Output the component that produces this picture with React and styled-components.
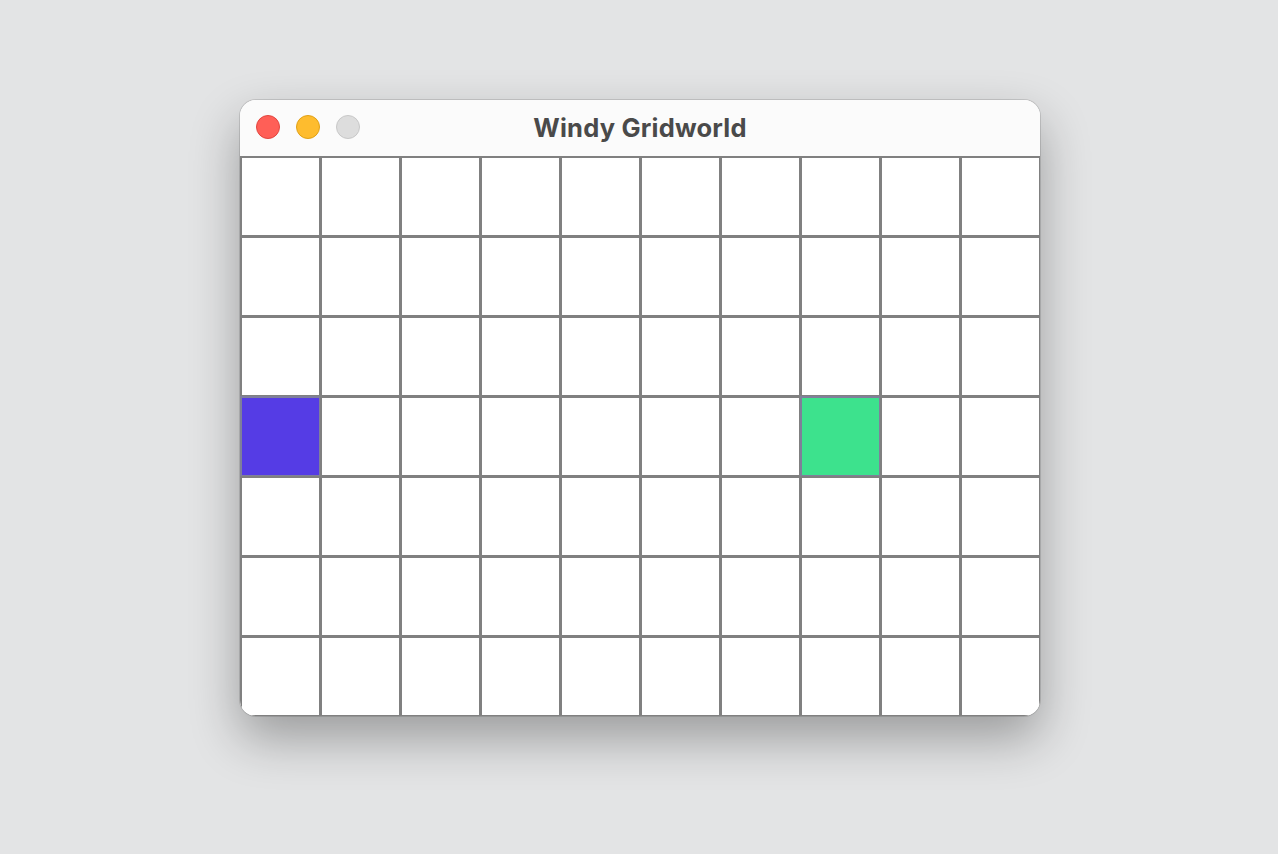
import React from "react";
import styled, { createGlobalStyle } from "styled-components";

const Global = createGlobalStyle`
  html, body { margin: 0; padding: 0; }
  body { background: #e3e4e5; font-family: Inter, "Noto Sans", sans-serif; }
`;

const Page = styled.div`
  height: 854px;
  box-sizing: border-box;
  padding: 100px 0 0 2px;
  display: flex;
  justify-content: center;
  align-items: flex-start;
`;

const Window = styled.div`
  width: 800px;
  border-radius: 16px;
  overflow: hidden;
  background: #fff;
  box-shadow: 0 0 0 1px rgba(0,0,0,0.12), 0 22px 50px rgba(0,0,0,0.32);
`;

const TitleBar = styled.div`
  height: 56px;
  background: #fbfbfb;
  position: relative;
  display: flex;
  align-items: center;
  justify-content: center;
`;

const Lights = styled.div`
  position: absolute;
  left: 16px;
  top: 15px;
  display: flex;
  gap: 16px;
`;

const Light = styled.span`
  width: 24px;
  height: 24px;
  border-radius: 50%;
  box-sizing: border-box;
  background: ${p => p.$c};
  border: 1px solid ${p => p.$b};
`;

const Title = styled.div`
  font-size: 25.5px;
  font-weight: 700;
  color: #4a4a4a;
  letter-spacing: 0.2px;
  margin-top: -1px;
`;

const Grid = styled.div`
  display: grid;
  grid-template-columns: repeat(10, 80px);
  grid-template-rows: repeat(7, 80px);
`;

const Cell = styled.div`
  box-sizing: border-box;
  border-style: solid;
  border-width: 2px 1px 1px 2px;
  border-color: ${p => (p.$fill ? "#7f7f9a" : "#808080")};
  background: ${p => p.$fill || "#fff"};
`;

export default function App() {
  const cells = [];
  for (let r = 0; r < 7; r++) {
    for (let c = 0; c < 10; c++) {
      let fill = null;
      if (r === 3 && c === 0) fill = "#553ce5";
      if (r === 3 && c === 7) fill = "#3de28d";
      cells.push(<Cell key={`${r}-${c}`} $fill={fill} />);
    }
  }
  return (
    <>
      <Global />
      <Page>
        <Window>
          <TitleBar>
            <Lights>
              <Light $c="#ff5f57" $b="#e2463f" />
              <Light $c="#febc2e" $b="#e1a116" />
              <Light $c="#dddddd" $b="#c8c8c8" />
            </Lights>
            <Title>Windy Gridworld</Title>
          </TitleBar>
          <Grid>{cells}</Grid>
        </Window>
      </Page>
    </>
  );
}
